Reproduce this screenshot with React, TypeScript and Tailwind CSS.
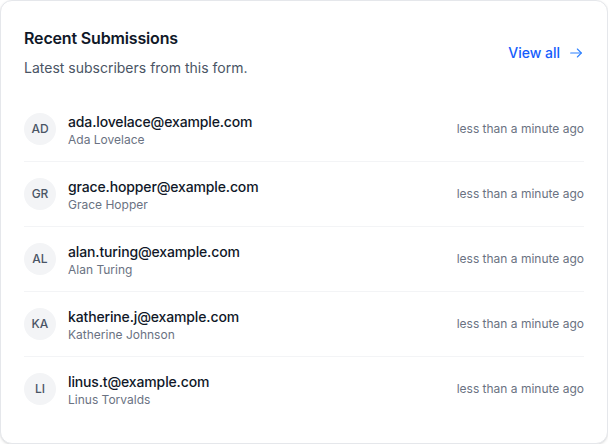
import React from "react";

const rows = [
  { i: "AD", email: "ada.lovelace@example.com", name: "Ada Lovelace" },
  { i: "GR", email: "grace.hopper@example.com", name: "Grace Hopper" },
  { i: "AL", email: "alan.turing@example.com", name: "Alan Turing" },
  { i: "KA", email: "katherine.j@example.com", name: "Katherine Johnson" },
  { i: "LI", email: "linus.t@example.com", name: "Linus Torvalds" },
];

export default function App() {
  return (
    <div className="w-[608px] h-[444px] bg-white" style={{ fontFamily: "Inter, 'Noto Sans', sans-serif" }}>
      <div className="w-[608px] h-[444px] rounded-xl border border-gray-200 bg-white shadow-sm px-[23px] pt-[25px]">
        <div className="flex items-center justify-between">
          <div>
            <h2 className="text-base leading-6 font-semibold text-gray-900 tracking-[-0.01em]">Recent Submissions</h2>
            <p className="mt-2 text-sm leading-5 text-gray-600">Latest subscribers from this form.</p>
          </div>
          <a className="flex items-center gap-2 text-sm font-medium text-blue-600 mt-0.5">
            View all
            <svg width="16" height="16" viewBox="0 0 24 24" fill="none" stroke="currentColor" strokeWidth="1.6" strokeLinecap="round" strokeLinejoin="round" className="text-blue-500">
              <path d="M4 12h16" />
              <path d="M14 6l6 6-6 6" />
            </svg>
          </a>
        </div>
        <ul className="mt-[19px]">
          {rows.map((r, idx) => (
            <li key={r.i} className={`flex items-center justify-between py-[13px] ${idx < rows.length - 1 ? "border-b border-gray-100" : ""}`}>
              <div className="flex items-center gap-3">
                <div className="w-8 h-8 rounded-full bg-gray-100 flex items-center justify-center text-xs font-medium text-gray-600">
                  {r.i}
                </div>
                <div className="pt-0.5">
                  <div className="text-sm leading-5 font-medium text-gray-900 tracking-[-0.01em]">{r.email}</div>
                  <div className="text-xs leading-4 text-gray-500">{r.name}</div>
                </div>
              </div>
              <div className="text-xs text-gray-500">less than a minute ago</div>
            </li>
          ))}
        </ul>
      </div>
    </div>
  );
}
